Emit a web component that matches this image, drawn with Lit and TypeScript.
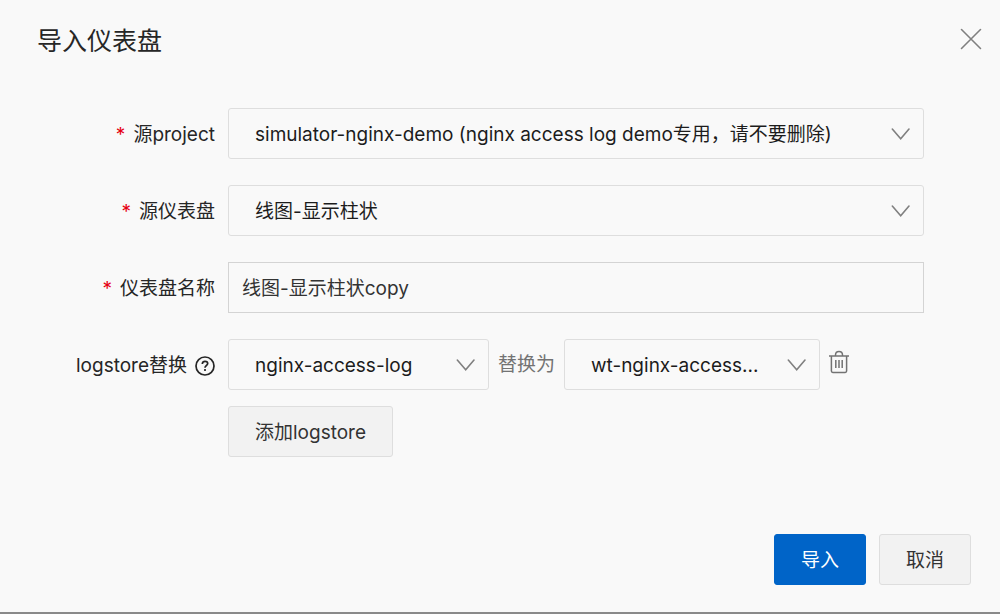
import { LitElement, html, css } from "lit";
import { customElement } from "lit/decorators.js";

@customElement("app-root")
class AppRoot extends LitElement {
  static styles = css`
    *,
    *::before,
    *::after {
      box-sizing: border-box;
    }
    :host {
      display: block;
      color: #262626;
      font-family: Inter, "Noto Sans CJK SC", sans-serif;
      font-size: 19px;
      line-height: 28px;
    }
    button,
    input,
    select {
      margin: 0;
      color: inherit;
      font: inherit;
    }
    svg {
      display: block;
      fill: none;
      stroke: currentColor;
    }
    .dialog {
      display: flex;
      flex-direction: column;
      min-height: 100vh;
      background: #f9f9f9;
      border-bottom: 2px solid #8a8a8a;
    }
    .header {
      display: flex;
      align-items: flex-start;
      justify-content: space-between;
      padding: 22px 18px 0 37px;
    }
    .title {
      margin: 0;
      font-size: 25px;
      line-height: 38px;
      font-weight: 400;
    }
    .icon-button {
      padding: 0;
      border: 0;
      background: none;
      color: #808080;
    }
    .close {
      padding-top: 6px;
    }
    .trash {
      padding-bottom: 6px;
      color: #737373;
    }
    .form {
      display: grid;
      grid-template-columns: 179px minmax(0, 1fr);
      gap: 26px 13px;
      padding: 48px 76px 26px 36px;
    }
    .label {
      display: flex;
      align-items: center;
      justify-content: flex-end;
      gap: 8px;
      height: 51px;
      padding-top: 2px;
      white-space: nowrap;
    }
    .required {
      color: #e60012;
      font-size: 19px;
    }
    .select-box {
      display: grid;
      align-items: center;
      min-width: 0;
    }
    .select {
      grid-area: 1 / 1;
      width: 100%;
      height: 51px;
      padding: 2px 48px 0 26px;
      border: 1px solid #dedede;
      border-radius: 3px;
      background: transparent;
      color: #1c1c1c;
      appearance: none;
      text-overflow: ellipsis;
    }
    .arrow {
      grid-area: 1 / 1;
      justify-self: end;
      margin-right: 13px;
      color: #808080;
      pointer-events: none;
    }
    .text {
      width: 100%;
      height: 51px;
      padding: 0 13px 2px;
      border: 1px solid #d4d4d4;
      border-radius: 0;
      background: transparent;
      color: #333;
    }
    .mapping {
      display: flex;
      align-items: center;
      gap: 9px;
      margin-bottom: 16px;
    }
    .source {
      flex: 0 1 261px;
    }
    .target {
      flex: 0 1 256px;
    }
    .between {
      color: #737373;
      white-space: nowrap;
    }
    .button {
      height: 51px;
      padding: 2px 26px 0;
      border: 1px solid #dedede;
      border-radius: 3px;
      background: #f2f2f2;
      color: #333;
    }
    .primary {
      border-color: #0064c8;
      background: #0064c8;
      color: #fff;
    }
    .footer {
      display: flex;
      justify-content: flex-end;
      gap: 13px;
      margin-top: auto;
      padding: 0 29px 27px;
    }
  `;

  private selectBox(id: string, value: string, className = "") {
    return html`
      <div class="select-box ${className}">
        <select class="select" id=${id}>
          <option selected>${value}</option>
        </select>
        <svg class="arrow" width="20" height="14" viewBox="0 0 20 14" stroke-width="1.6" stroke-linecap="round">
          <path d="M1.3 2 L9.7 11.8 L18 2" />
        </svg>
      </div>
    `;
  }

  render() {
    return html`
      <section class="dialog" role="dialog" aria-labelledby="title">
        <header class="header">
          <h1 class="title" id="title">导入仪表盘</h1>
          <button class="icon-button close" type="button" aria-label="关闭">
            <svg width="22" height="22" viewBox="0 0 22 22" stroke-width="1.6" stroke-linecap="round">
              <path d="M1.5 1.5 L20.5 20.5 M20.5 1.5 L1.5 20.5" />
            </svg>
          </button>
        </header>
        <form class="form" id="form" @submit=${(e: Event) => e.preventDefault()}>
          <label class="label" for="project"><span class="required">*</span>源project</label>
          ${this.selectBox("project", "simulator-nginx-demo (nginx access log demo专用，请不要删除)")}

          <label class="label" for="dashboard"><span class="required">*</span>源仪表盘</label>
          ${this.selectBox("dashboard", "线图-显示柱状")}

          <label class="label" for="name"><span class="required">*</span>仪表盘名称</label>
          <input class="text" id="name" type="text" value="线图-显示柱状copy" />

          <label class="label" for="source">
            logstore替换
            <svg width="20" height="20" viewBox="0 0 20 20" stroke-width="1.7">
              <circle cx="10" cy="10" r="9" />
              <path d="M7.3 8 C7.3 6.2 8.5 5.3 10 5.3 C11.6 5.3 12.7 6.2 12.7 7.6 C12.7 9.5 10 9.5 10 11.7" />
              <path d="M10 13 V14.9" />
            </svg>
          </label>
          <div>
            <div class="mapping">
              ${this.selectBox("source", "nginx-access-log", "source")}
              <label class="between" for="target">替换为</label>
              ${this.selectBox("target", "wt-nginx-access...", "target")}
              <button class="icon-button trash" type="button" aria-label="删除">
                <svg width="20" height="24" viewBox="0 0 20 24" stroke-width="1.5">
                  <path d="M0 6 H20 M2.4 6 V21 Q2.4 22.4 3.8 22.4 H16.2 Q17.6 22.4 17.6 21 V6" />
                  <path d="M6.5 6 V5 Q6.5 1.4 10 1.4 Q13.5 1.4 13.5 5 V6" />
                  <path d="M6.8 10 V18 M10 10 V18 M13.2 10 V18" />
                </svg>
              </button>
            </div>
            <button class="button" type="button">添加logstore</button>
          </div>
        </form>
        <footer class="footer">
          <button class="button primary" type="submit" form="form">导入</button>
          <button class="button" type="button">取消</button>
        </footer>
      </section>
    `;
  }
}
